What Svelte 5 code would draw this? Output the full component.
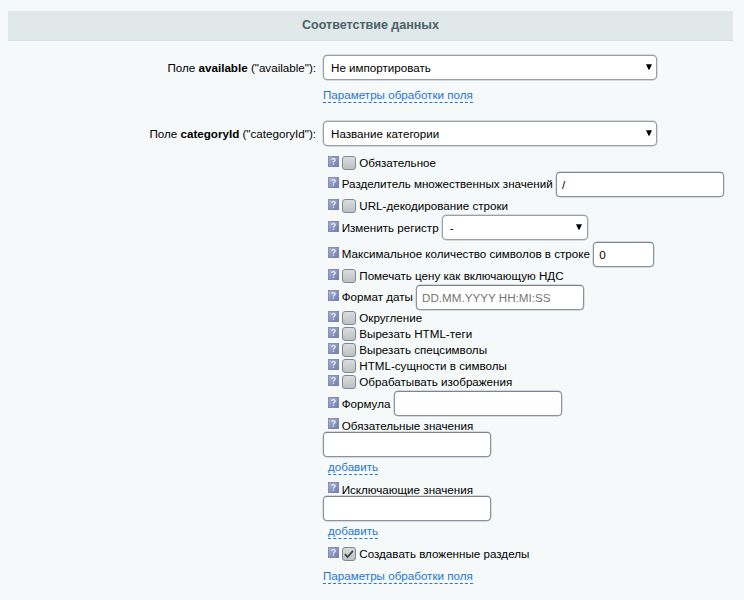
<script>
  const rows = [
    { label: 'Обязательное', type: 'check', h: 17 },
    { label: 'Разделитель множественных значений', type: 'text', value: '/', w: 168, h: 26 },
    { label: 'URL-декодирование строки', type: 'check', h: 17 },
    { label: 'Изменить регистр', type: 'choice', value: '-', w: 146, h: 27 },
    { label: 'Максимальное количество символов в строке', type: 'text', value: '0', w: 61, h: 26 },
    { label: 'Помечать цену как включающую НДС', type: 'check', h: 17 },
    { label: 'Формат даты', type: 'text', placeholder: 'DD.MM.YYYY HH:MI:SS', w: 168, h: 26 },
    { label: 'Округление', type: 'check', h: 16 },
    { label: 'Вырезать HTML-теги', type: 'check', h: 16 },
    { label: 'Вырезать спецсимволы', type: 'check', h: 16 },
    { label: 'HTML-сущности в символы', type: 'check', h: 16 },
    { label: 'Обрабатывать изображения', type: 'check', h: 16 },
    { label: 'Формула', type: 'text', w: 168, h: 27 },
    { label: 'Обязательные значения', type: 'list', h: 64 },
    { label: 'Исключающие значения', type: 'list', h: 64 },
    { label: 'Создавать вложенные разделы', type: 'check', checked: true, h: 17 }
  ];
</script>

{#snippet help()}
  <svg class="help" width="11" height="11" viewBox="0 0 11 11">
    <defs>
      <linearGradient id="hg" x1="0" y1="0" x2="1" y2="1">
        <stop offset="0" stop-color="#a9b1d3" />
        <stop offset="1" stop-color="#717cb0" />
      </linearGradient>
    </defs>
    <rect width="11" height="11" fill="#7b86b0" />
    <rect x="0.7" y="0.7" width="9.6" height="9.6" fill="url(#hg)" />
    <path d="M3.7 3.9Q3.9 2.6 5.5 2.6T7.2 4Q7.2 4.8 6.2 5.3T5.5 6.6M5.5 7.6V8.8" fill="none" stroke="#f1f3fb" stroke-width="1.25" />
  </svg>
{/snippet}

{#snippet select(value, w)}
  <div class="field select" style="width:{w}px">
    <span>{value}</span>
    <svg width="6" height="6" viewBox="0 0 6 6"><path d="M0 0.3H6L3.4 5.8H2.6Z" fill="#000" /></svg>
  </div>
{/snippet}

<main>
  <h1>Соответствие данных</h1>
  <section class="first">
    <div class="name">Поле <b>available</b> ("available"):</div>
    <div class="body">
      {@render select('Не импортировать', 334)}
      <div class="params"><a>Параметры обработки поля</a></div>
    </div>
  </section>
  <section>
    <div class="name">Поле <b>categoryId</b> ("categoryId"):</div>
    <div class="body">
      {@render select('Название категории', 334)}
      <div class="rows">
        {#each rows as r}
          <div class="row {r.type}" style="height:{r.h}px">
            <div class="line">
              {@render help()}
              {#if r.type === 'check'}
                <span class="box">
                  {#if r.checked}
                    <svg width="12" height="12" viewBox="0 0 12 12"><path d="M1.8 6.1L4.6 9L10 2.8" fill="none" stroke="#41474a" stroke-width="1.8" /></svg>
                  {/if}
                </span>
              {/if}
              <span class="label">{r.label}</span>
              {#if r.type === 'text'}
                <input class="field" style="width:{r.w}px" value={r.value ?? ''} placeholder={r.placeholder ?? ''} />
              {:else if r.type === 'choice'}
                {@render select(r.value, r.w)}
              {/if}
            </div>
            {#if r.type === 'list'}
              <input class="field" style="width:168px" />
              <div class="add"><a>добавить</a></div>
            {/if}
          </div>
        {/each}
      </div>
      <div class="params last"><a>Параметры обработки поля</a></div>
    </div>
  </section>
</main>

<style>
  :global(body) { background: #f5f9f9; overflow: hidden; }
  main {
    box-sizing: border-box;
    width: 744px;
    height: 600px;
    padding: 11px 11px 0 8px;
    background: #f5f9f9;
    color: #000;
    font: 11.63px/16px "Liberation Sans", Arial, sans-serif;
    white-space: nowrap;
  }
  h1 {
    box-sizing: border-box;
    height: 30px;
    margin: 0;
    border-bottom: 1px solid #d7e0e3;
    background: #e0e8ea;
    color: #4b6267;
    font-size: 12.53px;
    line-height: 28px;
    text-align: center;
  }
  section { display: flex; }
  .first { box-sizing: content-box; height: 66px; padding-top: 14px; }
  .name { width: 308px; padding-top: 5px; text-align: right; }
  .body { padding-left: 7px; }
  .field {
    box-sizing: border-box;
    height: 25px;
    margin: 0;
    padding: 0 5px;
    border: 1px solid #8b929f;
    border-top-color: #7c838e;
    border-radius: 4px;
    outline: 0;
    background: #fff;
    color: #000;
    font: 11.63px "Liberation Sans", Arial, sans-serif;
    box-shadow: 0 0 0 0.4px #b4bac2;
  }
  .field::placeholder { color: #757575; }
  .select {
    display: flex;
    align-items: center;
    justify-content: space-between;
    padding: 0 4px 0 7px;
    border-color: #999fa2;
  }
  .select svg { margin-bottom: 2px; }
  .params { padding-top: 7px; }
  .params.last { padding-top: 6px; }
  a {
    display: inline-block;
    height: 14px;
    border-bottom: 1px dashed #2675d7;
    color: #2675d7;
    line-height: 14px;
  }
  .rows { padding-top: 8px; }
  .row { display: flex; flex-direction: column; justify-content: center; }
  .list { justify-content: flex-start; }
  .line { display: flex; align-items: center; padding-left: 5px; }
  .help { flex: none; margin: 0 2.7px 3px 0; }
  .box {
    box-sizing: border-box;
    display: flex;
    width: 14px;
    height: 14px;
    margin-right: 3.6px;
    border: 1px solid #82898c;
    border-radius: 3px;
    background: linear-gradient(#d9dde0, #bcc1c4);
  }
  .line .field { margin-left: 3.2px; }
  .choice .select { padding-right: 5px; }
  .list .line { height: 15px; }
  .list .label { padding-top: 2px; }
  .add { height: 23px; padding: 2px 0 0 5px; box-sizing: border-box; }
</style>
